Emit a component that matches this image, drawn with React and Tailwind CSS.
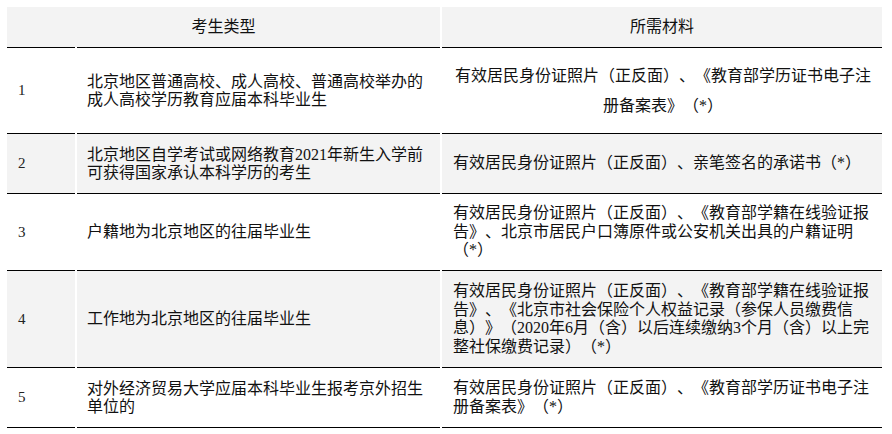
import React from 'react';

const rows = [
  {
    no: '1',
    type: '北京地区普通高校、成人高校、普通高校举办的成人高校学历教育应届本科毕业生',
    doc: '有效居民身份证照片（正反面）、《教育部学历证书电子注册备案表》（*）',
    h: 'h-[86px]',
    bg: 'bg-white',
    wide: true,
  },
  {
    no: '2',
    type: '北京地区自学考试或网络教育2021年新生入学前可获得国家承认本科学历的考生',
    doc: '有效居民身份证照片（正反面）、亲笔签名的承诺书（*）',
    h: 'h-[60px]',
    bg: 'bg-[#f3f3f3]',
  },
  {
    no: '3',
    type: '户籍地为北京地区的往届毕业生',
    doc: '有效居民身份证照片（正反面）、《教育部学籍在线验证报告》、北京市居民户口簿原件或公安机关出具的户籍证明（*）',
    h: 'h-[77px]',
    bg: 'bg-white',
  },
  {
    no: '4',
    type: '工作地为北京地区的往届毕业生',
    doc: '有效居民身份证照片（正反面）、《教育部学籍在线验证报告》、《北京市社会保险个人权益记录（参保人员缴费信息）》（2020年6月（含）以后连续缴纳3个月（含）以上完整社保缴费记录）（*）',
    h: 'h-[97px]',
    bg: 'bg-[#f3f3f3]',
  },
  {
    no: '5',
    type: '对外经济贸易大学应届本科毕业生报考京外招生单位的',
    doc: '有效居民身份证照片（正反面）、《教育部学历证书电子注册备案表》（*）',
    h: 'h-[61px]',
    bg: 'bg-white',
    last: true,
  },
];

const font = { fontFamily: '"Liberation Serif", "Noto Sans CJK SC", serif' };

export default function App() {
  return (
    <div
      className="w-[892px] h-[434px] bg-white pl-[5px] pt-[7px] text-[#111] [text-spacing-trim:space-all] [font-kerning:none]"
      style={font}
    >
      <table className="w-[879px] table-fixed border-separate border-spacing-x-[2px] border-spacing-y-0 text-[16px]">
        <colgroup>
          <col className="w-[68px]" />
          <col className="w-[363px]" />
          <col className="w-[440px]" />
        </colgroup>
        <thead>
          <tr className="h-[40px] bg-[#f3f3f3]">
            <th colSpan={2} className="bg-[#f3f3f3] font-normal text-center align-middle text-[#111]">
              考生类型
            </th>
            <th className="bg-[#f3f3f3] font-normal text-center align-middle text-[#111]">
              所需材料
            </th>
          </tr>
        </thead>
        <tbody>
          {rows.map((r) => {
            const cell = `${r.bg} border-t border-black align-middle ${r.last ? 'border-b' : ''}`;
            return (
              <tr key={r.no} className={r.h}>
                <td className={`${cell} pl-[11px] text-[15px] text-[#222]`}>{r.no}</td>
                <td className={`${cell} pl-[10px] pr-[10px] leading-[18px]`}>{r.type}</td>
                <td
                  className={`${cell} pl-[11px] pr-[9px] ${
                    r.wide ? 'text-center leading-[30px]' : 'leading-[18.5px]'
                  }`}
                >
                  {r.doc}
                </td>
              </tr>
            );
          })}
        </tbody>
      </table>
    </div>
  );
}
